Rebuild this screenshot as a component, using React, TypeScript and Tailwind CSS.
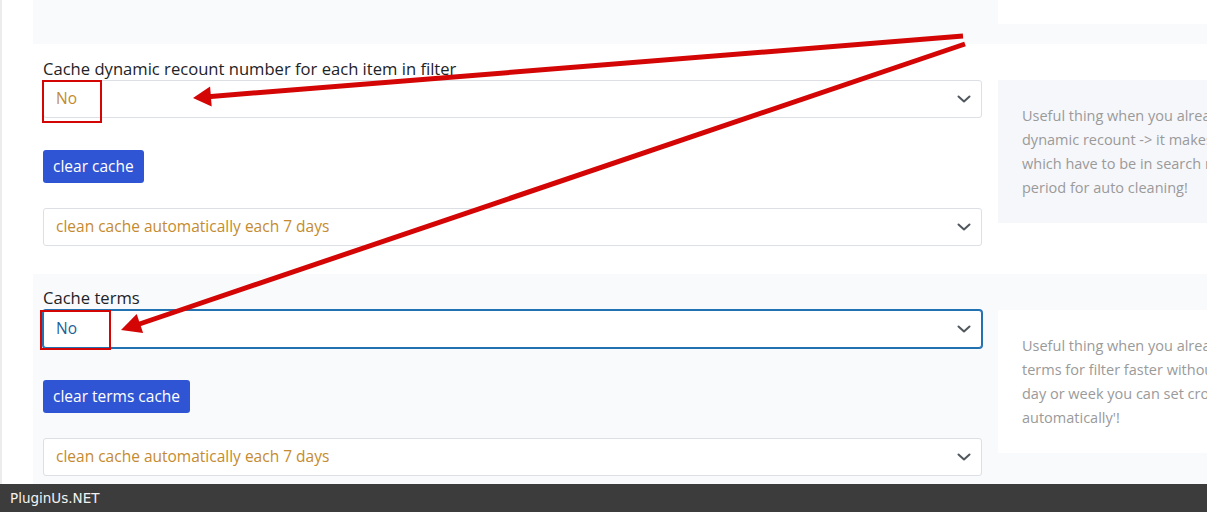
import React from "react";

const FONT = { fontFamily: "'Open Sans', Lato, sans-serif" };

function Chevron() {
  return (
    <svg width="14" height="8" viewBox="0 0 14 8" fill="none" stroke="#50575e" strokeWidth={2} strokeLinecap="round" strokeLinejoin="round" className="shrink-0">
      <path d="M1.5 1.5l5.5 5 5.5-5" />
    </svg>
  );
}

function Select({ value, focused = false }: { value: string; focused?: boolean }) {
  return (
    <div
      className={
        focused
          ? "flex h-[38px] w-full items-center justify-between rounded-[3px] border border-[#2271b1] bg-white pl-[12px] pr-[10px] text-[15.5px] text-[#1f5f95] shadow-[0_0_0_1px_#2271b1]"
          : "flex h-[38px] w-full items-center justify-between rounded-[3px] border border-[#dcdfe4] bg-white pl-[12px] pr-[10px] text-[15.5px] text-[#c48b2f]"
      }
    >
      <span>{value}</span>
      <Chevron />
    </div>
  );
}

function Button({ label }: { label: string }) {
  return (
    <button type="button" className="h-[33px] self-start rounded-[3px] bg-[#2f55d4] px-[10px] text-[15.5px] text-white">
      {label}
    </button>
  );
}

type Option = {
  title: string;
  btn: string;
  focused?: boolean;
  lines: string[];
  bg: string;
  boxBg: string;
};

const OPTIONS: Option[] = [
  {
    title: "Cache dynamic recount number for each item in filter",
    btn: "clear cache",
    lines: [
      "Useful thing when you already set up your site and now using",
      "dynamic recount -> it makes recount very fast! Of course if you added",
      "which have to be in search results you have to clean cache OR set time",
      "period for auto cleaning!",
    ],
    bg: "bg-white",
    boxBg: "bg-[#f6f7fa]",
  },
  {
    title: "Cache terms",
    btn: "clear terms cache",
    focused: true,
    lines: [
      "Useful thing when you already set up your site and now using",
      "terms for filter faster without big MySQL queries! If you adding new",
      "day or week you can set cron period for cleaning or 'clean cache",
      "automatically'!",
    ],
    bg: "bg-[#f9fafc]",
    boxBg: "bg-white",
  },
];

function OptionRow({ o, first }: { o: Option; first: boolean }) {
  return (
    <div className={`flex gap-[16px] pl-[10px] ${o.bg} ${first ? "h-[230px] pt-[14px]" : "h-[210px] pt-[13px]"}`}>
      <div className="flex w-[939px] shrink-0 flex-col">
        <div className="h-[22px] text-[16.6px] leading-[22px] text-[#1d2327]">{o.title}</div>
        <div className={first ? "" : "mt-[1px]"}>
          <Select value="No" focused={o.focused} />
        </div>
        <div className="mt-[32px] flex">
          <Button label={o.btn} />
        </div>
        <div className="mt-[25px]">
          <Select value="clean cache automatically each 7 days" />
        </div>
      </div>
      <div className={`mt-[22px] h-[143px] w-[420px] shrink-0 ${first ? "" : "mt-[23px]"} ${o.boxBg} pl-[24px] pt-[24px] text-[14.5px] leading-[24px] text-[#9a9a9a]`}>
        {o.lines.map((l) => (
          <div key={l} className="whitespace-nowrap">
            {l}
          </div>
        ))}
      </div>
    </div>
  );
}

function Arrows() {
  return (
    <svg className="pointer-events-none absolute left-0 top-0" width="1207" height="512" viewBox="0 0 1207 512">
      <line x1="963" y1="36" x2="208" y2="96.7" stroke="#d40505" strokeWidth={5} />
      <polygon points="193,98 211.7,106.5 210.1,86.6" fill="#d40505" />
      <line x1="965" y1="44" x2="138" y2="324.5" stroke="#d40505" strokeWidth={5} />
      <polygon points="121,330 143.1,333.1 136.7,314.1" fill="#d40505" />
    </svg>
  );
}

export default function App() {
  return (
    <div className="relative h-[512px] w-[1207px] overflow-hidden bg-white" style={FONT}>
      <div className="flex h-[484px] flex-col border-l-2 border-[#ececec] pl-[31px]">
        <div className="flex h-[44px] shrink-0 bg-[#f9fafc]">
          <div className="ml-[965px] h-[24px] w-[300px] bg-white" />
        </div>
        {OPTIONS.map((o, i) => (
          <OptionRow key={o.title} o={o} first={i === 0} />
        ))}
      </div>
      <div className="flex h-[28px] items-center bg-[#3c3c3c] pl-[10px] text-[13.5px] text-[#f2f2f2]" style={{ fontFamily: "'DejaVu Sans', sans-serif" }}>
        PluginUs.NET
      </div>
      <div className="pointer-events-none absolute left-[42px] top-[80px] h-[43px] w-[60px] border-2 border-[#d40505]" />
      <div className="pointer-events-none absolute left-[40px] top-[310px] h-[40px] w-[71px] border-2 border-[#d40505]" />
      <Arrows />
    </div>
  );
}
